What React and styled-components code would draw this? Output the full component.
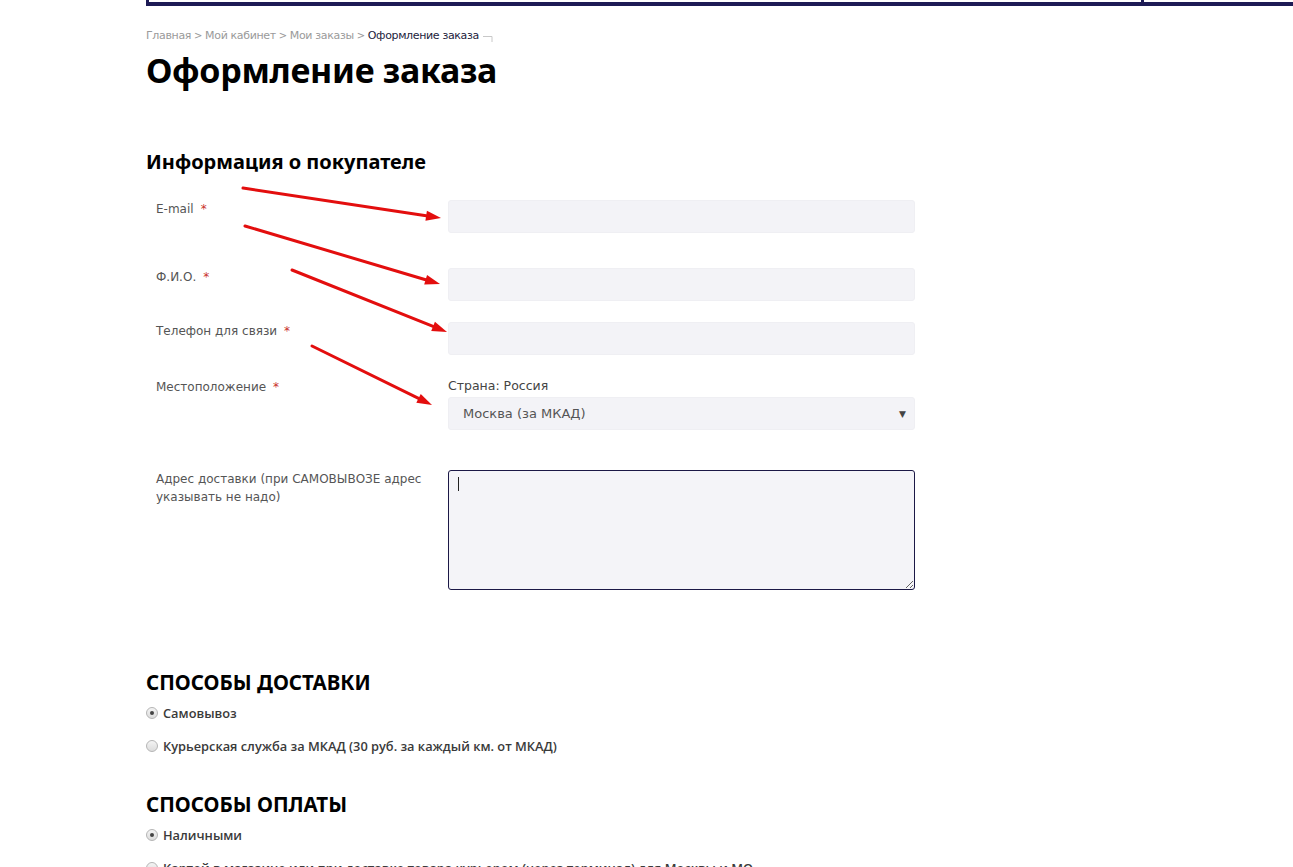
import React from "react";
import styled, { createGlobalStyle } from "styled-components";

const GlobalStyle = createGlobalStyle`
  html, body {
    margin: 0;
    padding: 0;
    background: #fff;
  }
  body {
    font-family: "DejaVu Sans", "Liberation Sans", sans-serif;
    color: #333;
  }
`;

const Page = styled.div`
  position: relative;
  width: 1293px;
  min-height: 867px;
  overflow: hidden;
`;

const HeaderEdge = styled.div`
  margin-left: 146px;
  height: 2px;
  border-left: 3px solid #1d1b55;
  border-bottom: 4px solid #1d1b55;
  display: flex;
  justify-content: flex-end;
`;

const HeaderDivider = styled.div`
  width: 3px;
  height: 2px;
  background: #1d1b55;
  margin-right: 149px;
`;

const Content = styled.div`
  padding-left: 146px;
`;

const Crumbs = styled.div`
  margin-top: 21px;
  display: flex;
  align-items: center;
  font-size: 11px;
  line-height: 16px;
  letter-spacing: -0.35px;
  color: #9a9a9a;
`;

const Crumb = styled.span`
  color: ${(p) => (p.$current ? "#1c1c3c" : "#9a9a9a")};
`;

const Sep = styled.span`
  margin: 0 3px;
  font-size: 10px;
`;

const Title = styled.h1`
  margin: 3px 0 0;
  font-family: "Noto Sans", "DejaVu Sans", sans-serif;
  font-weight: 700;
  font-size: 34px;
  line-height: 44px;
  color: #000;
  letter-spacing: -0.3px;
`;

const Heading = styled.h2`
  margin: ${(p) => p.$top}px 0 0;
  font-family: "Noto Sans", "DejaVu Sans", sans-serif;
  font-weight: 700;
  font-size: ${(p) => (p.$upper ? 20.5 : 20)}px;
  line-height: 24px;
  color: #000;
  text-transform: ${(p) => (p.$upper ? "uppercase" : "none")};
`;

const Form = styled.div`
  margin-top: 26px;
  width: 769px;
`;

const Row = styled.div`
  display: grid;
  grid-template-columns: 302px 467px;
  margin-bottom: ${(p) => p.$gap || 0}px;
`;

const Label = styled.div`
  padding-left: 10px;
  padding-right: 20px;
  font-size: 12px;
  line-height: 18px;
  color: #555;
`;

const Star = styled.span`
  color: #c9302c;
  margin-left: 7px;
`;

const Input = styled.input`
  box-sizing: border-box;
  width: 100%;
  height: 33px;
  border: 1px solid #efeff3;
  border-radius: 3px;
  background: #f3f3f7;
  outline: none;
`;

const Country = styled.div`
  font-size: 12.5px;
  line-height: 16px;
  color: #444;
  margin-bottom: 3px;
`;

const SelectBox = styled.div`
  box-sizing: border-box;
  height: 33px;
  border: 1px solid #efeff3;
  border-radius: 3px;
  background: #f3f3f7;
  display: flex;
  align-items: center;
  justify-content: space-between;
  padding: 0 8px 0 14px;
  font-size: 13px;
  color: #555;
`;

const Caret = styled.span`
  font-size: 9px;
  color: #444;
`;

const AreaWrap = styled.div`
  position: relative;
`;

const Area = styled.textarea`
  box-sizing: border-box;
  display: block;
  width: 100%;
  height: 120px;
  border: 1px solid #1b1846;
  border-radius: 3px;
  background: #f4f4f8;
  outline: none;
  resize: vertical;
`;

const TextCursor = styled.span`
  position: absolute;
  left: 10px;
  top: 7px;
  width: 1px;
  height: 14px;
  background: #222;
`;

const Options = styled.div`
  margin-top: 10px;
`;

const Option = styled.div`
  display: flex;
  align-items: center;
  gap: 5px;
  margin-bottom: 15px;
  font-family: "Open Sans", "DejaVu Sans", sans-serif;
  font-weight: 600;
  font-size: 12.8px;
  line-height: 18px;
  color: #3a3a3a;
  white-space: nowrap;
`;

const Radio = styled.span`
  box-sizing: border-box;
  width: 12px;
  height: 12px;
  border-radius: 50%;
  border: 1px solid #b5b5b5;
  background: linear-gradient(#f4f4f4, #dcdcdc);
  display: flex;
  align-items: center;
  justify-content: center;
  &::after {
    content: "";
    width: 4px;
    height: 4px;
    border-radius: 50%;
    background: ${(p) => (p.$checked ? "#444" : "transparent")};
  }
`;

const Annotations = styled.svg`
  position: absolute;
  left: 0;
  top: 0;
  pointer-events: none;
`;

const arrows = [
  [243, 188, 441, 218],
  [245, 226, 440, 284],
  [292, 270, 447, 332],
  [312, 346, 432, 405],
];

function Arrow({ x1, y1, x2, y2 }) {
  const a = Math.atan2(y2 - y1, x2 - x1);
  const len = 15;
  const w = 5;
  const bx = x2 - len * Math.cos(a);
  const by = y2 - len * Math.sin(a);
  const px = -Math.sin(a) * w;
  const py = Math.cos(a) * w;
  return (
    <g>
      <line x1={x1} y1={y1} x2={bx} y2={by} stroke="#e30e0e" strokeWidth="3" strokeLinecap="round" />
      <polygon points={`${x2},${y2} ${bx + px},${by + py} ${bx - px},${by - py}`} fill="#e30e0e" />
    </g>
  );
}

const fields = [
  { label: "E-mail", gap: 35 },
  { label: "Ф.И.О.", gap: 21 },
  { label: "Телефон для связи", gap: 23 },
];

export default function App() {
  return (
    <Page>
      <GlobalStyle />
      <HeaderEdge>
        <HeaderDivider />
      </HeaderEdge>
      <Content>
        <Crumbs>
          <Crumb>Главная</Crumb>
          <Sep>&gt;</Sep>
          <Crumb>Мой кабинет</Crumb>
          <Sep>&gt;</Sep>
          <Crumb>Мои заказы</Crumb>
          <Sep>&gt;</Sep>
          <Crumb $current>Оформление заказа</Crumb>
          <svg width="14" height="12" viewBox="0 0 14 12" style={{ marginLeft: 3, marginTop: 6 }}>
            <path d="M1 3.5H10V9" fill="none" stroke="#c8c8c8" strokeWidth="1" />
          </svg>
        </Crumbs>
        <Title>Оформление заказа</Title>

        <Heading $top={58}>Информация о покупателе</Heading>
        <Form>
          {fields.map((f) => (
            <Row key={f.label} $gap={f.gap}>
              <Label>
                {f.label}
                <Star>*</Star>
              </Label>
              <Input />
            </Row>
          ))}
          <Row $gap={40}>
            <Label>
              Местоположение
              <Star>*</Star>
            </Label>
            <div>
              <Country>Страна: Россия</Country>
              <SelectBox>
                <span>Москва (за МКАД)</span>
                <Caret>▼</Caret>
              </SelectBox>
            </div>
          </Row>
          <Row>
            <Label>Адрес доставки (при САМОВЫВОЗЕ адрес указывать не надо)</Label>
            <AreaWrap>
              <Area />
              <TextCursor />
            </AreaWrap>
          </Row>
        </Form>

        <Heading $top={80} $upper>
          Способы доставки
        </Heading>
        <Options>
          <Option>
            <Radio $checked />
            Самовывоз
          </Option>
          <Option>
            <Radio />
            Курьерская служба за МКАД (30 руб. за каждый км. от МКАД)
          </Option>
        </Options>

        <Heading $top={37} $upper>
          Способы оплаты
        </Heading>
        <Options>
          <Option>
            <Radio $checked />
            Наличными
          </Option>
          <Option>
            <Radio />
            Картой в магазине или при доставке товара курьером (через терминал) для Москвы и МО
          </Option>
        </Options>
      </Content>
      <Annotations width="1293" height="867">
        {arrows.map(([x1, y1, x2, y2], i) => (
          <Arrow key={i} x1={x1} y1={y1} x2={x2} y2={y2} />
        ))}
      </Annotations>
    </Page>
  );
}
